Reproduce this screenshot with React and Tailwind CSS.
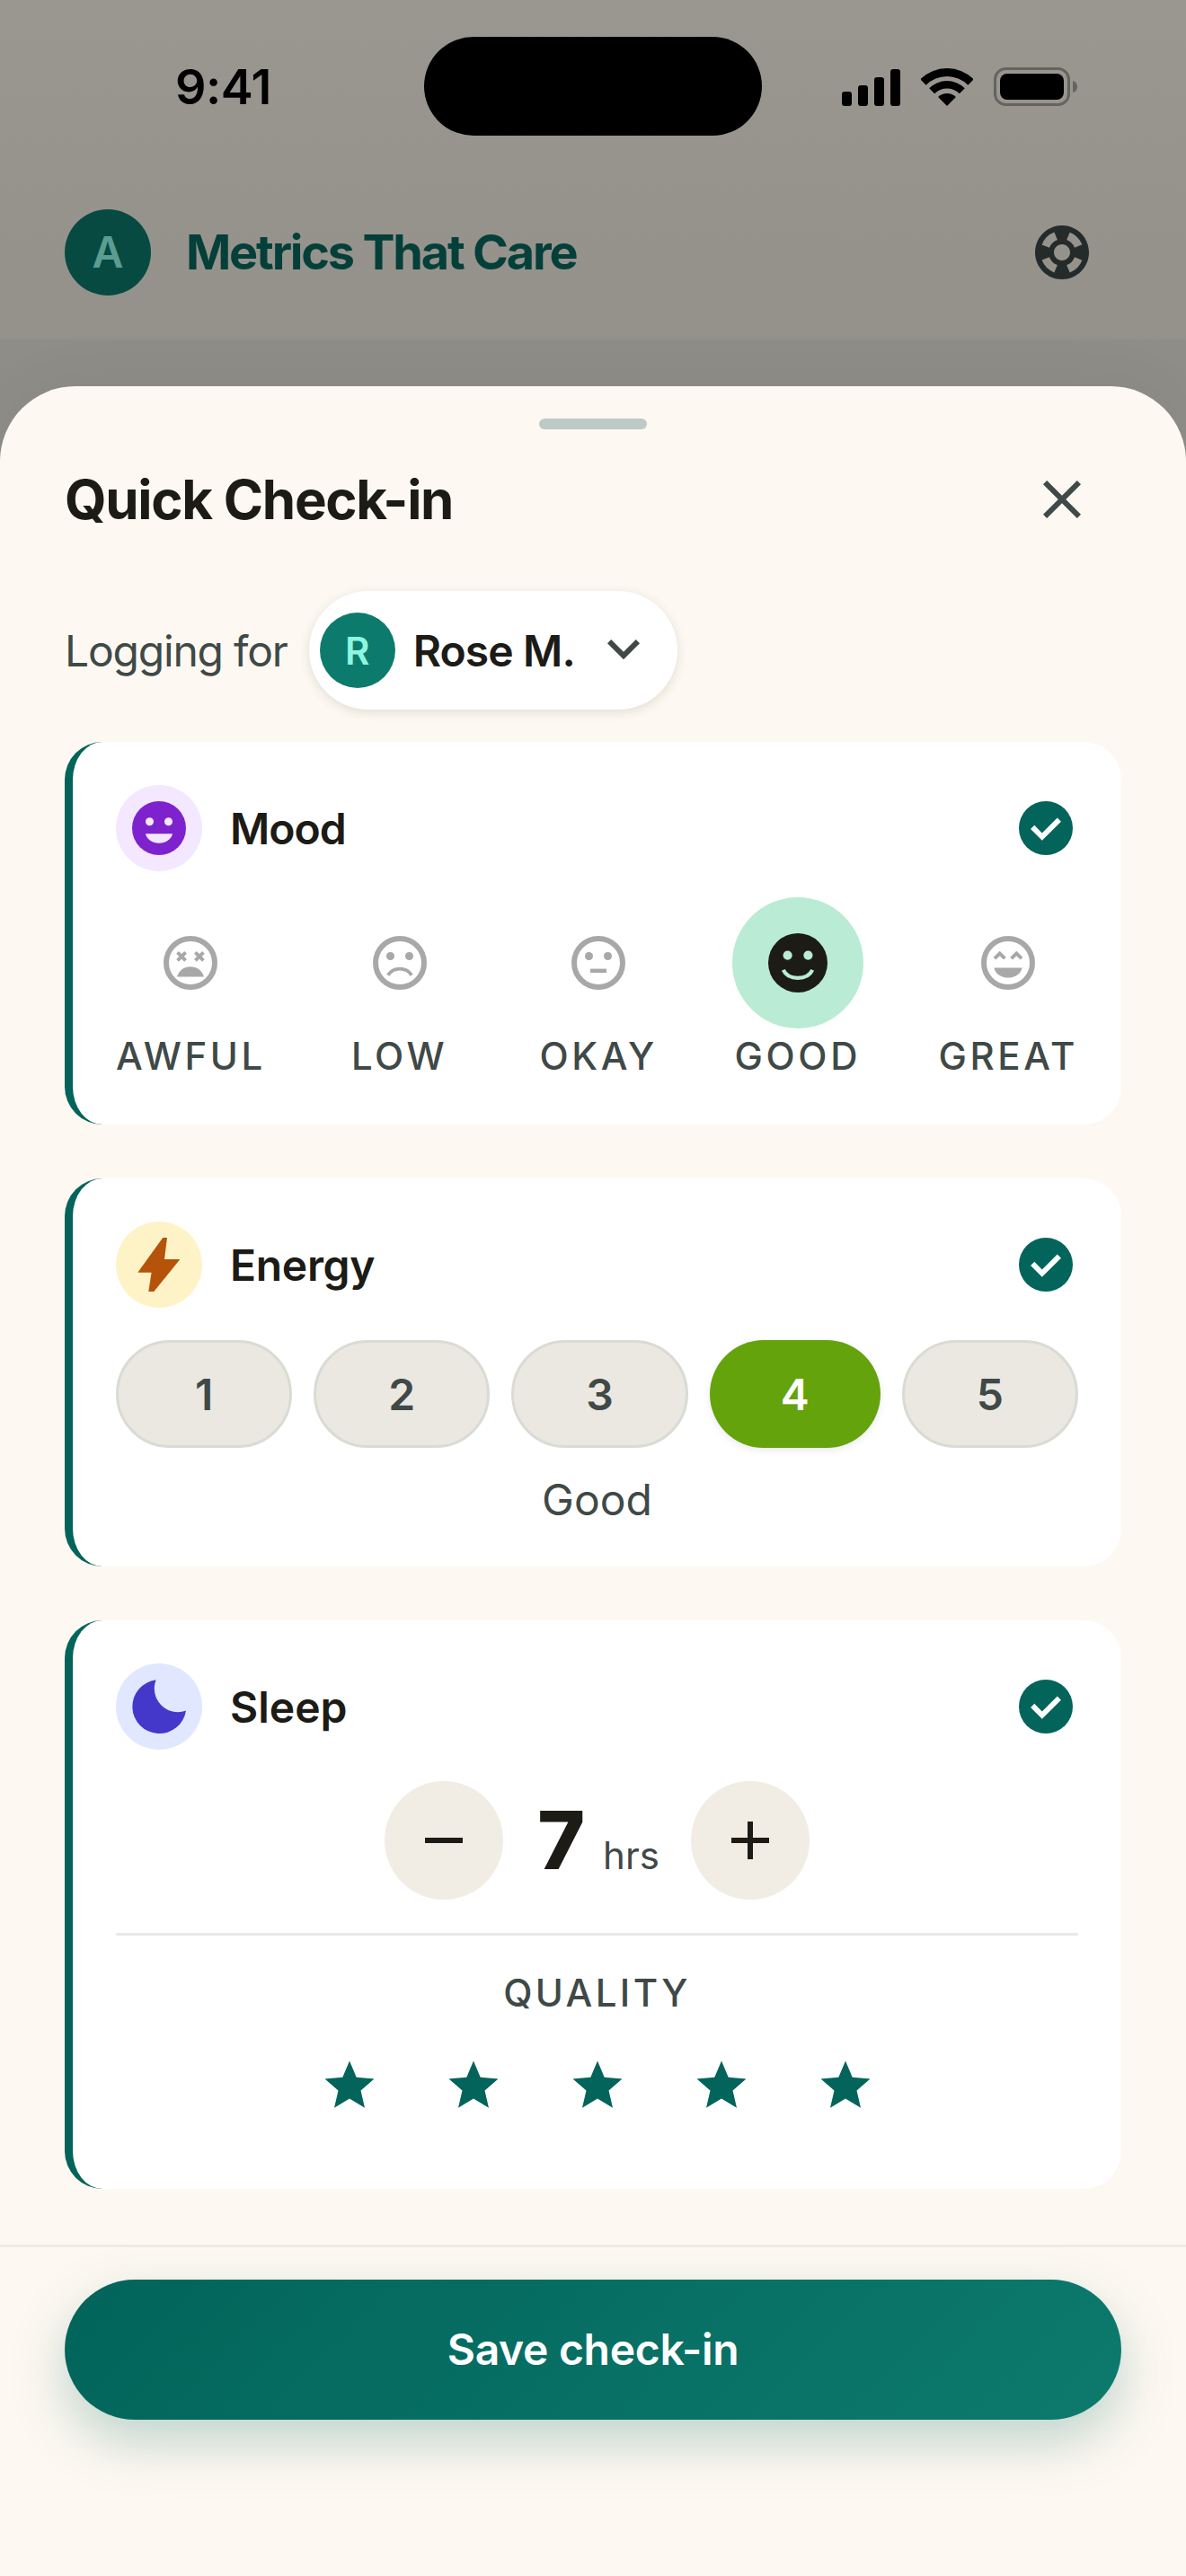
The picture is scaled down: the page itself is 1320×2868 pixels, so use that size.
import React from 'react';
import { MdSupport } from 'react-icons/md';

const FONT = { fontFamily: 'Inter, sans-serif' };

const CheckBadge = () => (
    <svg viewBox="0 0 24 24" className="w-[72px] h-[72px]">
        <circle cx="12" cy="12" r="10" fill="#02645a" />
        <path d="m10.6 16.6 7.05-7.05-1.4-1.4-5.65 5.65-2.85-2.85-1.4 1.4 4.25 4.25Z" fill="#fff" />
    </svg>
);

const FaceOutline = ({ children }) => (
    <svg viewBox="0 0 24 24" className="w-[72px] h-[72px]">
        <circle cx="12" cy="12" r="9" fill="none" stroke="#a8a8a8" strokeWidth="2" />
        {children}
    </svg>
);

const AwfulFace = () => (
    <FaceOutline>
        <path d="M7.2 8.1l3 3M10.2 8.1l-3 3M13.8 8.1l3 3M16.8 8.1l-3 3" stroke="#a8a8a8" strokeWidth="1.3" fill="none" />
        <path d="M7 17.2C7.6 14.9 9.6 13.4 12 13.4s4.4 1.5 5 3.8Z" fill="#a8a8a8" />
    </FaceOutline>
);

const LowFace = () => (
    <FaceOutline>
        <circle cx="8.5" cy="9.5" r="1.5" fill="#a8a8a8" />
        <circle cx="15.5" cy="9.5" r="1.5" fill="#a8a8a8" />
        <path d="M7.6 16.6C8.6 15 10.2 14.2 12 14.2s3.4.8 4.4 2.4" stroke="#a8a8a8" strokeWidth="1.3" fill="none" />
    </FaceOutline>
);

const OkayFace = () => (
    <FaceOutline>
        <circle cx="8.5" cy="9.5" r="1.5" fill="#a8a8a8" />
        <circle cx="15.5" cy="9.5" r="1.5" fill="#a8a8a8" />
        <rect x="9" y="14.2" width="6" height="1.5" fill="#a8a8a8" />
    </FaceOutline>
);

const GoodFace = () => (
    <svg viewBox="0 0 24 24" className="w-[72px] h-[72px]">
        <circle cx="12" cy="12" r="11" fill="#1c1b16" />
        <circle cx="8.2" cy="9.2" r="1.7" fill="#b9ebd5" />
        <circle cx="15.8" cy="9.2" r="1.7" fill="#b9ebd5" />
        <path d="M6.6 14.6C7.6 16.8 9.6 17.6 12 17.6s4.4-.8 5.4-3" stroke="#b9ebd5" strokeWidth="1.4" fill="none" />
    </svg>
);

const GreatFace = () => (
    <FaceOutline>
        <path d="M7 10.4l1.9-1.9 1.9 1.9M13.2 10.4l1.9-1.9 1.9 1.9" stroke="#a8a8a8" strokeWidth="1.3" fill="none" />
        <path d="M6.8 13.8h10.4C16.8 16 14.6 17.5 12 17.5s-4.8-1.5-5.2-3.7Z" fill="#a8a8a8" />
    </FaceOutline>
);

const moods = [
    { label: 'AWFUL', Face: AwfulFace },
    { label: 'LOW', Face: LowFace },
    { label: 'OKAY', Face: OkayFace },
    { label: 'GOOD', Face: GoodFace, active: true },
    { label: 'GREAT', Face: GreatFace, extra: 'ml-[8px]' },
];

const CardHeader = ({ title, tint, tracking, children }) => (
    <div className="flex items-center justify-between">
        <div className="flex items-center gap-[31px]">
            <div className={`w-[96px] h-[96px] rounded-full flex items-center justify-center ${tint}`}>
                {children}
            </div>
            <span className={`pt-[2px] text-[48px] leading-[60px] font-semibold text-[#1c1b16] ${tracking}`}>{title}</span>
        </div>
        <CheckBadge />
    </div>
);

const Card = ({ className, children }) => (
    <section className={`bg-white rounded-[42px] border-l-[9px] border-[#02645a] pl-[48px] pr-[48px] pt-[48px] ${className}`}>
        {children}
    </section>
);

const StatusIcons = () => (
    <div className="flex items-end gap-[23px] ml-[89px]">
        <svg width="65" height="41" viewBox="0 0 65 41" fill="#000">
            <rect x="0" y="25" width="11" height="16" rx="3" />
            <rect x="18" y="18" width="11" height="23" rx="3" />
            <rect x="36" y="9" width="11" height="32" rx="3" />
            <rect x="54" y="0" width="11" height="41" rx="3" />
        </svg>
        <svg width="58" height="42" viewBox="0 0 58 42" fill="#000">
            <path d="M-.7 12.3A42 42 0 0 1 58.7 12.3L52.3 18.7A33 33 0 0 0 5.7 18.7Z" />
            <path d="M9.2 22.2A28 28 0 0 1 48.8 22.2L42.8 28.2A19.5 19.5 0 0 0 15.2 28.2Z" />
            <path d="M19.1 32.1A14 14 0 0 1 38.9 32.1L29 42Z" />
        </svg>
        <svg width="94" height="43" viewBox="0 0 94 43">
            <rect x="1.5" y="1.5" width="82" height="40" rx="12" fill="none" stroke="#66635f" strokeWidth="3" />
            <rect x="7" y="7" width="71" height="29" rx="8" fill="#000" />
            <path d="M88 15c3 .6 5 3.2 5 6.500s-2 5.900-5 6.500Z" fill="#66635f" />
        </svg>
    </div>
);

const App = () => {
    return (
        <div className="w-[1320px] h-[2868px] flex flex-col overflow-hidden bg-[#8f8d87]" style={FONT}>
            <div className="h-[378px] shrink-0 bg-gradient-to-b from-[#9a9791] to-[#94918b]">
                <div className="flex items-center pt-[41px]">
                    <span className="ml-[195px] w-[277px] pt-[2px] text-[54px] leading-[64px] font-semibold tracking-[-0.5px] text-black">9:41</span>
                    <div className="w-[376px] h-[110px] rounded-full bg-black" />
                    <StatusIcons />
                </div>
                <div className="flex items-center justify-between pl-[72px] pr-[102px] mt-[82px]">
                    <div className="flex items-center gap-[39px]">
                        <div className="w-[96px] h-[96px] rounded-full bg-[#074a42] flex items-center justify-center text-[48px] font-semibold text-[#5c9c91]">A</div>
                        <span className="text-[54px] leading-[64px] font-bold tracking-[-2.2px] text-[#053f39]">Metrics That Care</span>
                    </div>
                    <MdSupport className="w-[72px] h-[72px] text-[#252b2a]" />
                </div>
            </div>

            <div className="h-[52px] shrink-0" />

            <div className="flex-1 rounded-t-[84px] bg-[#fdf9f2] flex flex-col shadow-[0_-12px_60px_rgba(0,0,0,0.04)]">
                <div className="w-[120px] h-[12px] mt-[36px] mx-auto rounded-full bg-[#bdcac6]" />

                <div className="flex items-center justify-between pl-[72px] pr-[102px] mt-[42px]">
                    <h2 className="text-[60px] leading-[72px] font-bold tracking-[-1.3px] text-[#1c1b16]">Quick Check-in</h2>
                    <svg viewBox="0 0 24 24" className="w-[72px] h-[72px]" fill="#3f4947">
                        <path d="M6.400 19 5 17.600 10.600 12 5 6.400 6.400 5 12 10.600 17.600 5 19 6.400 13.400 12 19 17.600 17.600 19 12 13.400 6.400 19Z" />
                    </svg>
                </div>

                <div className="flex items-center gap-[24px] px-[72px] mt-[66px]">
                    <span className="pt-[2px] text-[48px] leading-[60px] tracking-[-1.2px] text-[#3f4947]">Logging for</span>
                    <button className="h-[132px] flex items-center pl-[12px] pr-[24px] rounded-full bg-white shadow-[0_3px_12px_rgba(60,50,30,0.14)]">
                        <span className="w-[84px] h-[84px] rounded-full bg-[#0d7a6e] flex items-center justify-center text-[42px] font-semibold text-[#8ff5df]">R</span>
                        <span className="ml-[20px] pt-[2px] text-[48px] leading-[60px] font-semibold tracking-[-0.9px] text-[#1c1b16]">Rose M.</span>
                        <svg viewBox="0 0 24 24" className="w-[72px] h-[72px] ml-[18px]" fill="#3f4947">
                            <path d="M12 15.400 6 9.400 7.400 8 12 12.600 16.600 8 18 9.400 12 15.400Z" />
                        </svg>
                    </button>
                </div>

                <div className="flex flex-col gap-[60px] px-[72px] mt-[36px]">
                    <Card className="h-[426px]">
                        <CardHeader title="Mood" tint="bg-[#f3e8ff]" tracking="tracking-[-0.96px]">
                            <svg viewBox="0 0 24 24" className="w-[72px] h-[72px]">
                                <circle cx="12" cy="12" r="10" fill="#7e22ce" />
                                <circle cx="8.500" cy="9.600" r="1.500" fill="#f3e8ff" />
                                <circle cx="15.500" cy="9.600" r="1.500" fill="#f3e8ff" />
                                <path d="M7 14.100h10C16.600 16.200 14.500 17.600 12 17.600s-4.600-1.400-5-3.500Z" fill="#f3e8ff" />
                            </svg>
                        </CardHeader>
                        <div className="flex justify-between mt-[29px]">
                            {moods.map(({ label, Face, active, extra }) => (
                                <div key={label} className={`flex flex-col items-center ${extra || ''}`}>
                                    <div className={`w-[146px] h-[146px] rounded-full flex items-center justify-center ${active ? 'bg-[#b9ebd5]' : ''}`}>
                                        <Face />
                                    </div>
                                    <span className="mt-[4px] text-[42px] leading-[54px] font-medium tracking-[3.6px] text-[#3f4947]">{label}</span>
                                </div>
                            ))}
                        </div>
                    </Card>

                    <Card className="h-[432px]">
                        <CardHeader title="Energy" tint="bg-[#fef3c7]" tracking="tracking-[-0.3px]">
                            <svg viewBox="0 0 24 24" className="w-[72px] h-[72px]">
                                <polygon points="13.400,2 15,2 14,10 19.800,10 10.100,22 8.100,22 9.200,14.900 4.100,14.900" fill="#b45309" />
                            </svg>
                        </CardHeader>
                        <div className="flex gap-[24px] mt-[36px]">
                            {[1, 2, 3, 4, 5].map((n) => (
                                <div
                                    key={n}
                                    className={n === 4
                                        ? 'flex-1 h-[120px] rounded-full bg-[#65a30d] flex items-center justify-center pt-[2px] text-[48px] font-semibold text-white shadow-[0_3px_9px_rgba(0,0,0,0.08)]'
                                        : 'flex-1 h-[120px] rounded-full bg-[#ebe8e1] border-[3px] border-[#d9dbd4] flex items-center justify-center pt-[2px] text-[48px] font-semibold text-[#3f4947]'}
                                >
                                    {n}
                                </div>
                            ))}
                        </div>
                        <p className="mt-[28px] text-center text-[48px] leading-[60px] text-[#3f4947]">Good</p>
                    </Card>

                    <Card className="h-[633px]">
                        <CardHeader title="Sleep" tint="bg-[#e0e7ff]" tracking="tracking-normal">
                            <svg viewBox="0 0 24 24" className="w-[72px] h-[72px]">
                                <path d="M10.900 2.100A10 10 0 1 0 22 13.500 8.700 8.700 0 0 1 10.900 2.100Z" fill="#4338ca" />
                            </svg>
                        </CardHeader>
                        <div className="flex items-center justify-center gap-[35px] mt-[35px]">
                            <button className="w-[132px] h-[132px] rounded-full bg-[#f1ede5] flex items-center justify-center">
                                <svg viewBox="0 0 24 24" className="w-[72px] h-[72px]" fill="#1c1b16"><rect x="5" y="11" width="14" height="2" /></svg>
                            </button>
                            <div className="flex items-baseline gap-[20px] pl-[3px]">
                                <span className="text-[90px] leading-[110px] font-extrabold text-[#1c1b16]">7</span>
                                <span className="text-[42px] leading-[50px] text-[#3f4947]">hrs</span>
                            </div>
                            <button className="w-[132px] h-[132px] rounded-full bg-[#f1ede5] flex items-center justify-center">
                                <svg viewBox="0 0 24 24" className="w-[72px] h-[72px]" fill="#1c1b16"><path d="M11 19v-6H5v-2h6V5h2v6h6v2h-6v6h-2Z" /></svg>
                            </button>
                        </div>
                        <div className="h-[3px] bg-[#e6ebe9] mt-[37px]" />
                        <p className="mt-[37px] text-center text-[42px] leading-[54px] font-medium tracking-[3.4px] text-[#3f4947]">QUALITY</p>
                        <div className="flex justify-center gap-[72px] mt-[43px]">
                            {[1, 2, 3, 4, 5].map((n) => (
                                <svg key={n} viewBox="0 0 24 24" className="w-[66px] h-[66px]" fill="#02645a">
                                    <path d="M5.825 21 7.450 13.975 2 9.250l7.200-.625L12 2l2.800 6.625 7.200.625-5.450 4.725L18.175 21 12 17.275 5.825 21Z" />
                                </svg>
                            ))}
                        </div>
                    </Card>
                </div>

                <div className="mt-[62px] border-t-[3px] border-[#eeece4] pt-[36px] px-[72px]">
                    <button className="w-full h-[156px] rounded-full bg-[linear-gradient(135deg,#02645a,#0d7a6e)] text-white text-[48px] font-semibold tracking-[-0.3px] shadow-[0_24px_60px_rgba(2,100,90,0.25)]">
                        Save check-in
                    </button>
                </div>
            </div>
        </div>
    );
};

export default App;
